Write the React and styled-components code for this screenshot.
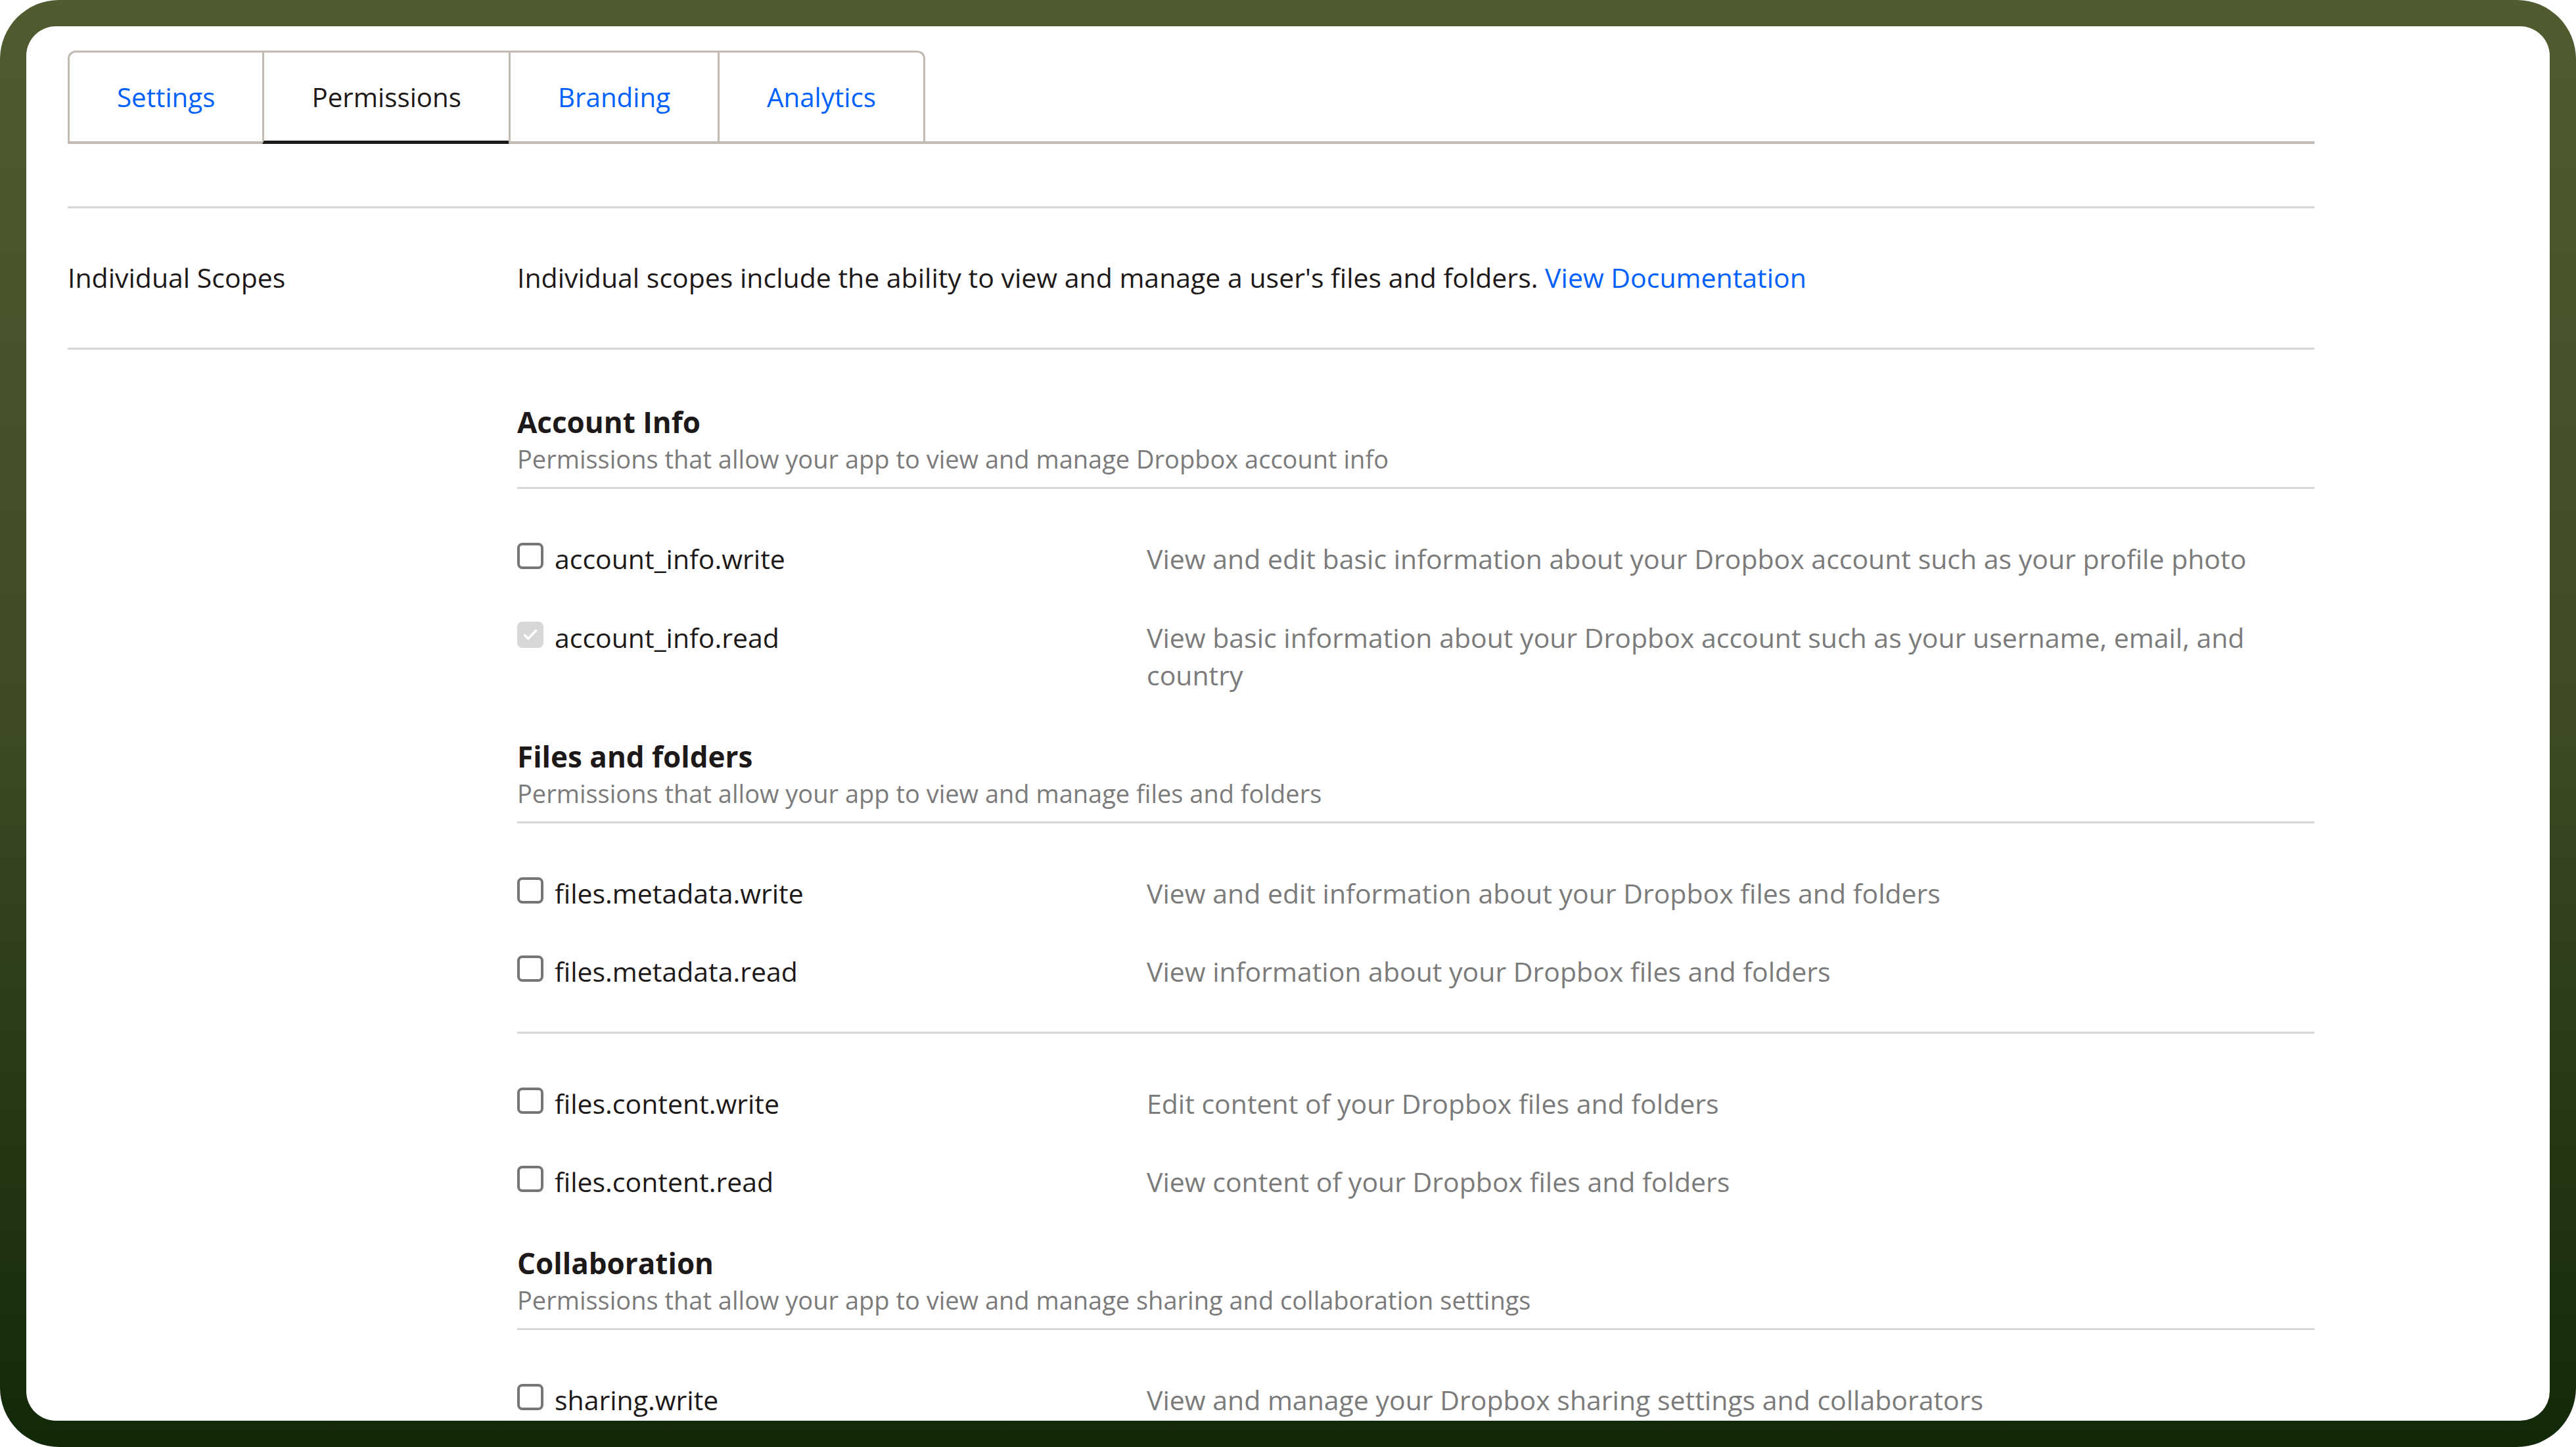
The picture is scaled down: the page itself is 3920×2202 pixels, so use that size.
import React from "react";
import styled, { createGlobalStyle } from "styled-components";

const GlobalStyle = createGlobalStyle`
  html, body {
    margin: 0;
    padding: 0;
    background: #ffffff;
  }
  body {
    font-family: "Open Sans", "Noto Sans", sans-serif;
    color: #1e1919;
  }
`;

const Frame = styled.div`
  width: 3920px;
  height: 2202px;
  box-sizing: border-box;
  padding: 40px;
  border-radius: 90px;
  background: linear-gradient(180deg, #505b2f 0%, #3d4a25 50%, #122909 100%);
`;

const Panel = styled.div`
  height: 100%;
  box-sizing: border-box;
  background: #ffffff;
  border-radius: 45px;
  overflow: hidden;
  padding: 37px 358px 0 63px;
`;

const TabBar = styled.div`
  display: flex;
  border-bottom: 4px solid #c2bbb3;
`;

const TabGroup = styled.div`
  display: flex;
  border: 3px solid #c2bbb3;
  border-bottom: none;
  border-radius: 12px 12px 0 0;
`;

const Tab = styled.div`
  display: flex;
  align-items: center;
  height: 134px;
  padding: 0 72px;
  margin-bottom: -4px;
  font-size: 40.3px;
  color: ${(props) => (props.active ? "#1e1919" : "#0061fe")};
  border-bottom: 5px solid ${(props) => (props.active ? "#1e1919" : "transparent")};
  & + & {
    border-left: 3px solid #c2bbb3;
  }
`;

const ScopeHeader = styled.div`
  display: flex;
  margin-top: 95px;
  padding: 77px 0 78px;
  border-top: 3px solid #d6d6d6;
  border-bottom: 3px solid #d6d6d6;
  font-size: 41px;
  line-height: 57px;
`;

const ScopeLabel = styled.div`
  width: 684px;
  flex-shrink: 0;
`;

const Link = styled.a`
  color: #0061fe;
  text-decoration: none;
`;

const ScopeBody = styled.div`
  margin-left: 684px;
  padding-top: 47px;
`;

const Group = styled.div`
  padding-top: 35px;
`;

const GroupHead = styled.div`
  padding-bottom: 15px;
  border-bottom: 3px solid #d6d6d6;
`;

const GroupTitle = styled.div`
  font-size: 44px;
  font-weight: 700;
  line-height: 56px;
`;

const GroupSub = styled.div`
  font-size: 38px;
  line-height: 56px;
  color: #7b7b7b;
`;

const RowList = styled.div`
  padding-top: 47px;
  & + & {
    margin-top: 31px;
    border-top: 3px solid #d6d6d6;
  }
`;

const Row = styled.div`
  display: flex;
  align-items: flex-start;
  padding: 31px 0;
  font-size: 41px;
  line-height: 57.5px;
`;

const RowName = styled.label`
  display: flex;
  align-items: flex-start;
  gap: 17px;
  width: 958px;
  flex-shrink: 0;
`;

const Box = styled.span`
  width: 40px;
  height: 40px;
  margin-top: 4px;
  box-sizing: border-box;
  border-radius: 8px;
  flex-shrink: 0;
  display: flex;
  align-items: center;
  justify-content: center;
  border: ${(props) => (props.disabled ? "none" : "4px solid #767676")};
  background: ${(props) => (props.disabled ? "#d7d7d7" : "#ffffff")};
`;

const RowDesc = styled.div`
  flex: 1;
  color: #7b7b7b;
`;

const groups = [
  {
    title: "Account Info",
    sub: "Permissions that allow your app to view and manage Dropbox account info",
    lists: [
      [
        {
          name: "account_info.write",
          desc: "View and edit basic information about your Dropbox account such as your profile photo",
        },
        {
          name: "account_info.read",
          desc: "View basic information about your Dropbox account such as your username, email, and country",
          locked: true,
        },
      ],
    ],
  },
  {
    title: "Files and folders",
    sub: "Permissions that allow your app to view and manage files and folders",
    lists: [
      [
        {
          name: "files.metadata.write",
          desc: "View and edit information about your Dropbox files and folders",
        },
        {
          name: "files.metadata.read",
          desc: "View information about your Dropbox files and folders",
        },
      ],
      [
        {
          name: "files.content.write",
          desc: "Edit content of your Dropbox files and folders",
        },
        {
          name: "files.content.read",
          desc: "View content of your Dropbox files and folders",
        },
      ],
    ],
  },
  {
    title: "Collaboration",
    sub: "Permissions that allow your app to view and manage sharing and collaboration settings",
    lists: [
      [
        {
          name: "sharing.write",
          desc: "View and manage your Dropbox sharing settings and collaborators",
        },
      ],
    ],
  },
];

const Check = () => (
  <svg width="26" height="26" viewBox="0 0 24 24">
    <path
      d="M4 12.5l5 5L20 6"
      fill="none"
      stroke="#ffffff"
      strokeWidth="3.2"
      strokeLinecap="round"
      strokeLinejoin="round"
    />
  </svg>
);

const App = () => {
  const tabs = ["Settings", "Permissions", "Branding", "Analytics"];

  return (
    <>
      <GlobalStyle />
      <Frame>
        <Panel>
          <TabBar>
            <TabGroup>
              {tabs.map((t) => (
                <Tab key={t} active={t === "Permissions"}>
                  {t}
                </Tab>
              ))}
            </TabGroup>
          </TabBar>

          <ScopeHeader>
            <ScopeLabel>Individual Scopes</ScopeLabel>
            <div>
              Individual scopes include the ability to view and manage a
              user's files and folders. <Link href="#">View Documentation</Link>
            </div>
          </ScopeHeader>

          <ScopeBody>
            {groups.map((group) => (
              <Group key={group.title}>
                <GroupHead>
                  <GroupTitle>{group.title}</GroupTitle>
                  <GroupSub>{group.sub}</GroupSub>
                </GroupHead>
                {group.lists.map((list, i) => (
                  <RowList key={i}>
                    {list.map((row) => (
                      <Row key={row.name}>
                        <RowName>
                          <Box disabled={row.locked}>
                            {row.locked ? <Check /> : null}
                          </Box>
                          {row.name}
                        </RowName>
                        <RowDesc>{row.desc}</RowDesc>
                      </Row>
                    ))}
                  </RowList>
                ))}
              </Group>
            ))}
          </ScopeBody>
        </Panel>
      </Frame>
    </>
  );
};

export default App;
